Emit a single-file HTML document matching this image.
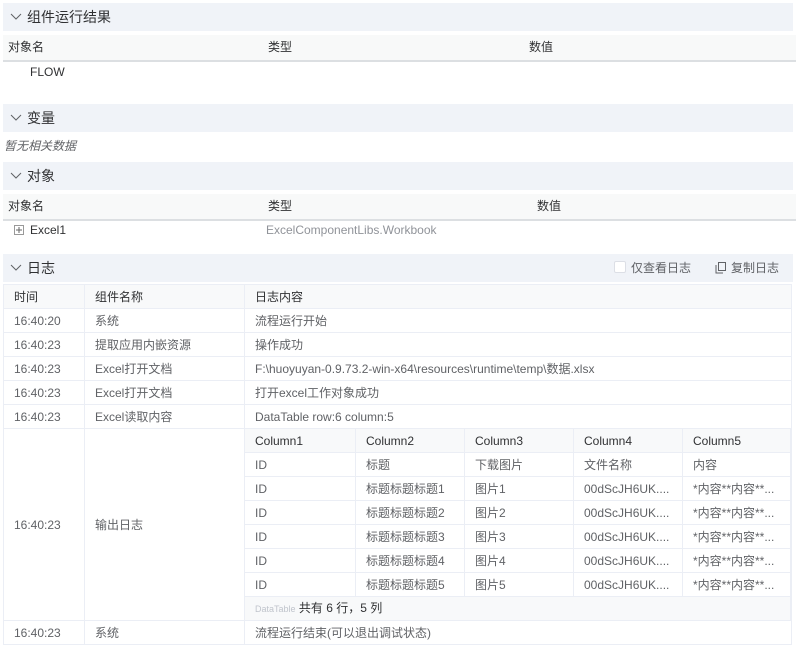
<!DOCTYPE html>
<html><head><meta charset="utf-8"><style>
*{box-sizing:border-box;margin:0;padding:0}
body{width:796px;height:650px;background:#fff;font-family:"Liberation Sans","Noto Sans CJK SC",sans-serif;font-size:12px;color:#606266;position:relative;overflow:hidden}
.a{position:absolute;white-space:nowrap}
.hd{position:absolute;left:3px;width:790px;height:28px;background:#f0f3f8;font-size:14px;color:#303133;line-height:28px;padding-left:24px}
.hd svg{position:absolute;left:7px;top:10px}
.th{position:absolute;left:3px;width:793px;height:27px;background:#f8f9f9;border-bottom:2px solid #dcdfe2;color:#303133;line-height:25px}
table{position:absolute;border-collapse:collapse;table-layout:fixed}
td{border:1px solid #ebeef5;height:24px;padding:0 0 0 10px;white-space:nowrap;overflow:hidden;line-height:22px}
.lh td{background:#f8f9fa;color:#303133}
.in td{padding-left:10px}
.in tr.h td{background:#f8f9fa;color:#303133}
</style></head><body>
<div class="hd" style="top:3px"><svg width="12" height="8"><path d="M1 1l5 5 5-5" fill="none" stroke="#606266" stroke-width="1"/></svg>组件运行结果</div>
<div class="th" style="top:35px"><span class="a" style="left:5px">对象名</span><span class="a" style="left:265px">类型</span><span class="a" style="left:526px">数值</span></div>
<div class="a" style="left:30px;top:65px;color:#303133">FLOW</div>
<div class="hd" style="top:104px"><svg width="12" height="8"><path d="M1 1l5 5 5-5" fill="none" stroke="#606266" stroke-width="1"/></svg>变量</div>
<div class="a" style="left:4px;top:137px;font-style:italic">暂无相关数据</div>
<div class="hd" style="top:162px"><svg width="12" height="8"><path d="M1 1l5 5 5-5" fill="none" stroke="#606266" stroke-width="1"/></svg>对象</div>
<div class="th" style="top:194px"><span class="a" style="left:5px">对象名</span><span class="a" style="left:265px">类型</span><span class="a" style="left:534px">数值</span></div>
<svg class="a" style="left:14px;top:225px" width="10" height="10"><rect x="0.5" y="0.5" width="9" height="9" fill="none" stroke="#999"/><path d="M2 5h6M5 2v6" stroke="#666"/></svg>
<div class="a" style="left:30px;top:223px;color:#303133">Excel1</div>
<div class="a" style="left:266px;top:223px;color:#909399">ExcelComponentLibs.Workbook</div>
<div class="hd" style="top:254px"><svg width="12" height="8"><path d="M1 1l5 5 5-5" fill="none" stroke="#606266" stroke-width="1"/></svg>日志
<span class="a" style="left:611px;top:7px;width:12px;height:12px;border:1px solid #dcdfe6;border-radius:2px;background:#fff"></span>
<span class="a" style="left:628px;top:0;font-size:12px;color:#606266">仅查看日志</span>
<svg class="a" style="left:712px;top:8px" width="11" height="12"><rect x="3.5" y="0.5" width="7" height="8" fill="none" stroke="#606266"/><path d="M1 3v8h7" fill="none" stroke="#606266"/></svg>
<span class="a" style="left:728px;top:0;font-size:12px;color:#606266">复制日志</span></div>
<table style="left:3px;top:284px;width:789px">
<colgroup><col style="width:81px"><col style="width:160px"><col></colgroup>
<tr class="lh"><td>时间</td><td>组件名称</td><td>日志内容</td></tr>
<tr><td>16:40:20</td><td>系统</td><td>流程运行开始</td></tr>
<tr><td>16:40:23</td><td>提取应用内嵌资源</td><td>操作成功</td></tr>
<tr><td>16:40:23</td><td>Excel打开文档</td><td>F:\huoyuyan-0.9.73.2-win-x64\resources\runtime\temp\数据.xlsx</td></tr>
<tr><td>16:40:23</td><td>Excel打开文档</td><td>打开excel工作对象成功</td></tr>
<tr><td>16:40:23</td><td>Excel读取内容</td><td>DataTable row:6 column:5</td></tr>
<tr><td style="height:192px">16:40:23</td><td>输出日志</td><td style="padding:0"></td></tr>
<tr><td>16:40:23</td><td>系统</td><td>流程运行结束(可以退出调试状态)</td></tr>
</table>
<table class="in" style="left:244px;top:428px;width:547px">
<colgroup><col style="width:111px"><col style="width:109px"><col style="width:109px"><col style="width:109px"><col></colgroup>
<tr class="h"><td>Column1</td><td>Column2</td><td>Column3</td><td>Column4</td><td>Column5</td></tr>
<tr><td>ID</td><td>标题</td><td>下载图片</td><td>文件名称</td><td>内容</td></tr>
<tr><td>ID</td><td>标题标题标题1</td><td>图片1</td><td>00dScJH6UK....</td><td>*内容**内容**...</td></tr>
<tr><td>ID</td><td>标题标题标题2</td><td>图片2</td><td>00dScJH6UK....</td><td>*内容**内容**...</td></tr>
<tr><td>ID</td><td>标题标题标题3</td><td>图片3</td><td>00dScJH6UK....</td><td>*内容**内容**...</td></tr>
<tr><td>ID</td><td>标题标题标题4</td><td>图片4</td><td>00dScJH6UK....</td><td>*内容**内容**...</td></tr>
<tr><td>ID</td><td>标题标题标题5</td><td>图片5</td><td>00dScJH6UK....</td><td>*内容**内容**...</td></tr>
<tr><td colspan="5" style="background:#f8f9fa;color:#303133"><span style="font-size:9px;color:#c0c4cc">DataTable</span> 共有 6 行，5 列</td></tr>
</table>
</body></html>
